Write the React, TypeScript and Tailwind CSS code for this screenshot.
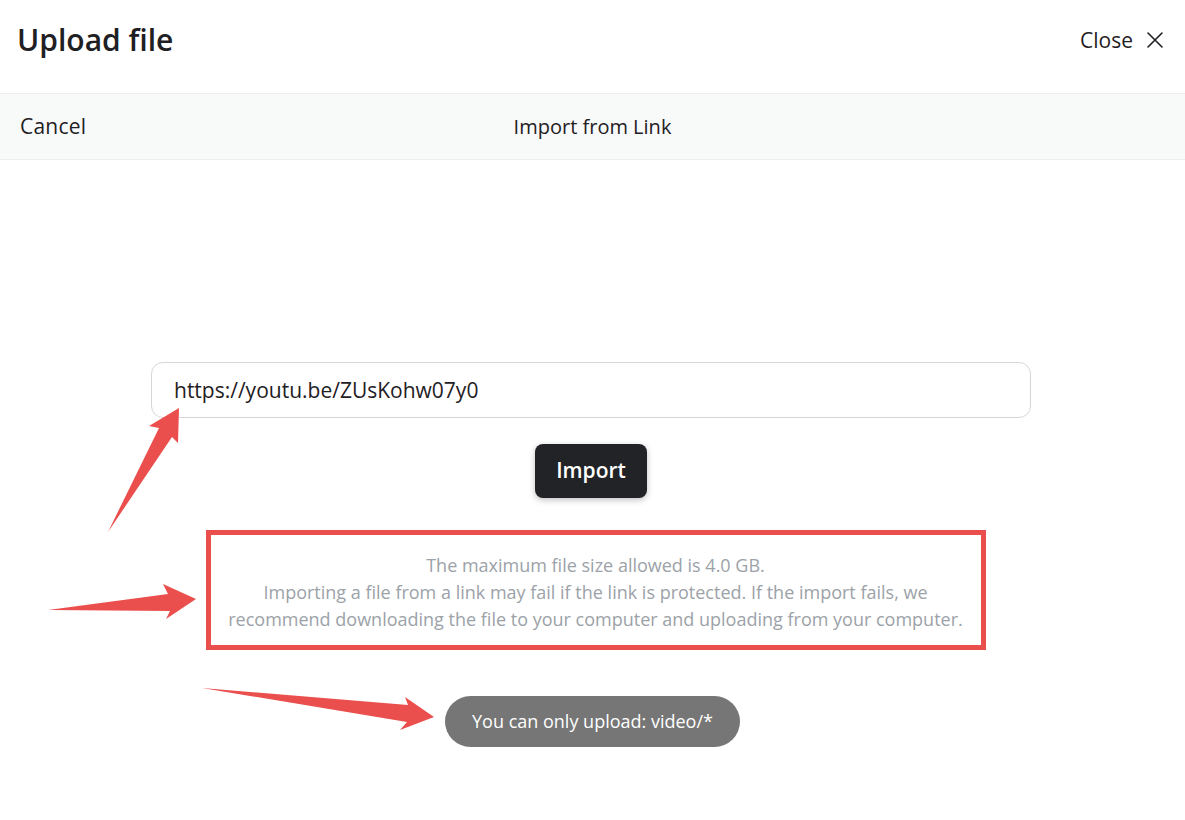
import * as React from "react";

const FONT = { fontFamily: '"Open Sans", "Liberation Sans", sans-serif' };

function CloseIcon() {
  return (
    <svg width="16" height="16" viewBox="0 0 16 16" className="text-[#1f2023]">
      <path d="M1 1 L15 15 M15 1 L1 15" stroke="currentColor" strokeWidth="1.6" strokeLinecap="round" />
    </svg>
  );
}

// annotation arrows drawn over the page
function Arrows() {
  return (
    <svg
      className="pointer-events-none absolute inset-0"
      width="1185"
      height="820"
      viewBox="0 0 1185 820"
    >
      <polygon
        fill="#ea4f4d"
        points="108,532 159,428 149,426 179,408 178,443 172,437"
      />
      <polygon
        fill="#ea4f4d"
        points="48,610 168,594 163,584 196,599 166,619 170,611"
      />
      <polygon
        fill="#ea4f4d"
        points="202,688 408,705 405,697 434,717 400,730 407,722"
      />
    </svg>
  );
}

export default function App() {
  const [url, setUrl] = React.useState("https://youtu.be/ZUsKohw07y0");

  return (
    <div className="relative h-[820px] w-[1185px] overflow-hidden bg-white text-[#1f2023]" style={FONT}>
      <header className="flex h-[94px] items-start justify-between border-b border-[#ededed] pl-[17px] pr-[22px] pt-[20px]">
        <h1 className="text-[30px] font-semibold leading-[40px]">Upload file</h1>
        <button className="flex items-center gap-[14px] text-[21px] leading-[40px]">
          Close
          <CloseIcon />
        </button>
      </header>

      <div className="relative flex h-[66px] items-center justify-center border-b border-[#ededed] bg-[#f8f9f9]">
        <button className="absolute left-[20px] text-[21px] font-medium tracking-[0.2px]">Cancel</button>
        <span className="text-[20px]">Import from Link</span>
      </div>

      <main className="flex flex-col items-center pt-[202px]">
        <input
          value={url}
          onChange={(e) => setUrl(e.target.value)}
          className="mr-[3px] h-[56px] w-[880px] rounded-[12px] border border-[#d6d6d6] px-[22px] text-[21px] text-[#1f2023] outline-none"
        />
        <button className="mr-[3px] mt-[26px] h-[54px] rounded-[8px] bg-[#212327] px-[21px] text-[21px] font-semibold text-white shadow-[0_2px_6px_rgba(0,0,0,0.25)]">
          Import
        </button>

        <div className="ml-[6px] mt-[32px] w-[780px] border-[5px] border-[#ea4f4d] pb-[12px] pt-[17px]">
          <p className="text-center text-[18px] leading-[27px] text-[#9ca2a8]">
            The maximum file size allowed is 4.0 GB.
            <br />
            Importing a file from a link may fail if the link is protected. If the import fails, we
            <br />
            recommend downloading the file to your computer and uploading from your computer.
          </p>
        </div>

        <div className="mt-[46px] flex h-[51px] items-center rounded-full bg-[#767676] px-[27px] text-[18px] text-white">
          You can only upload: video/*
        </div>
      </main>

      <Arrows />
    </div>
  );
}
